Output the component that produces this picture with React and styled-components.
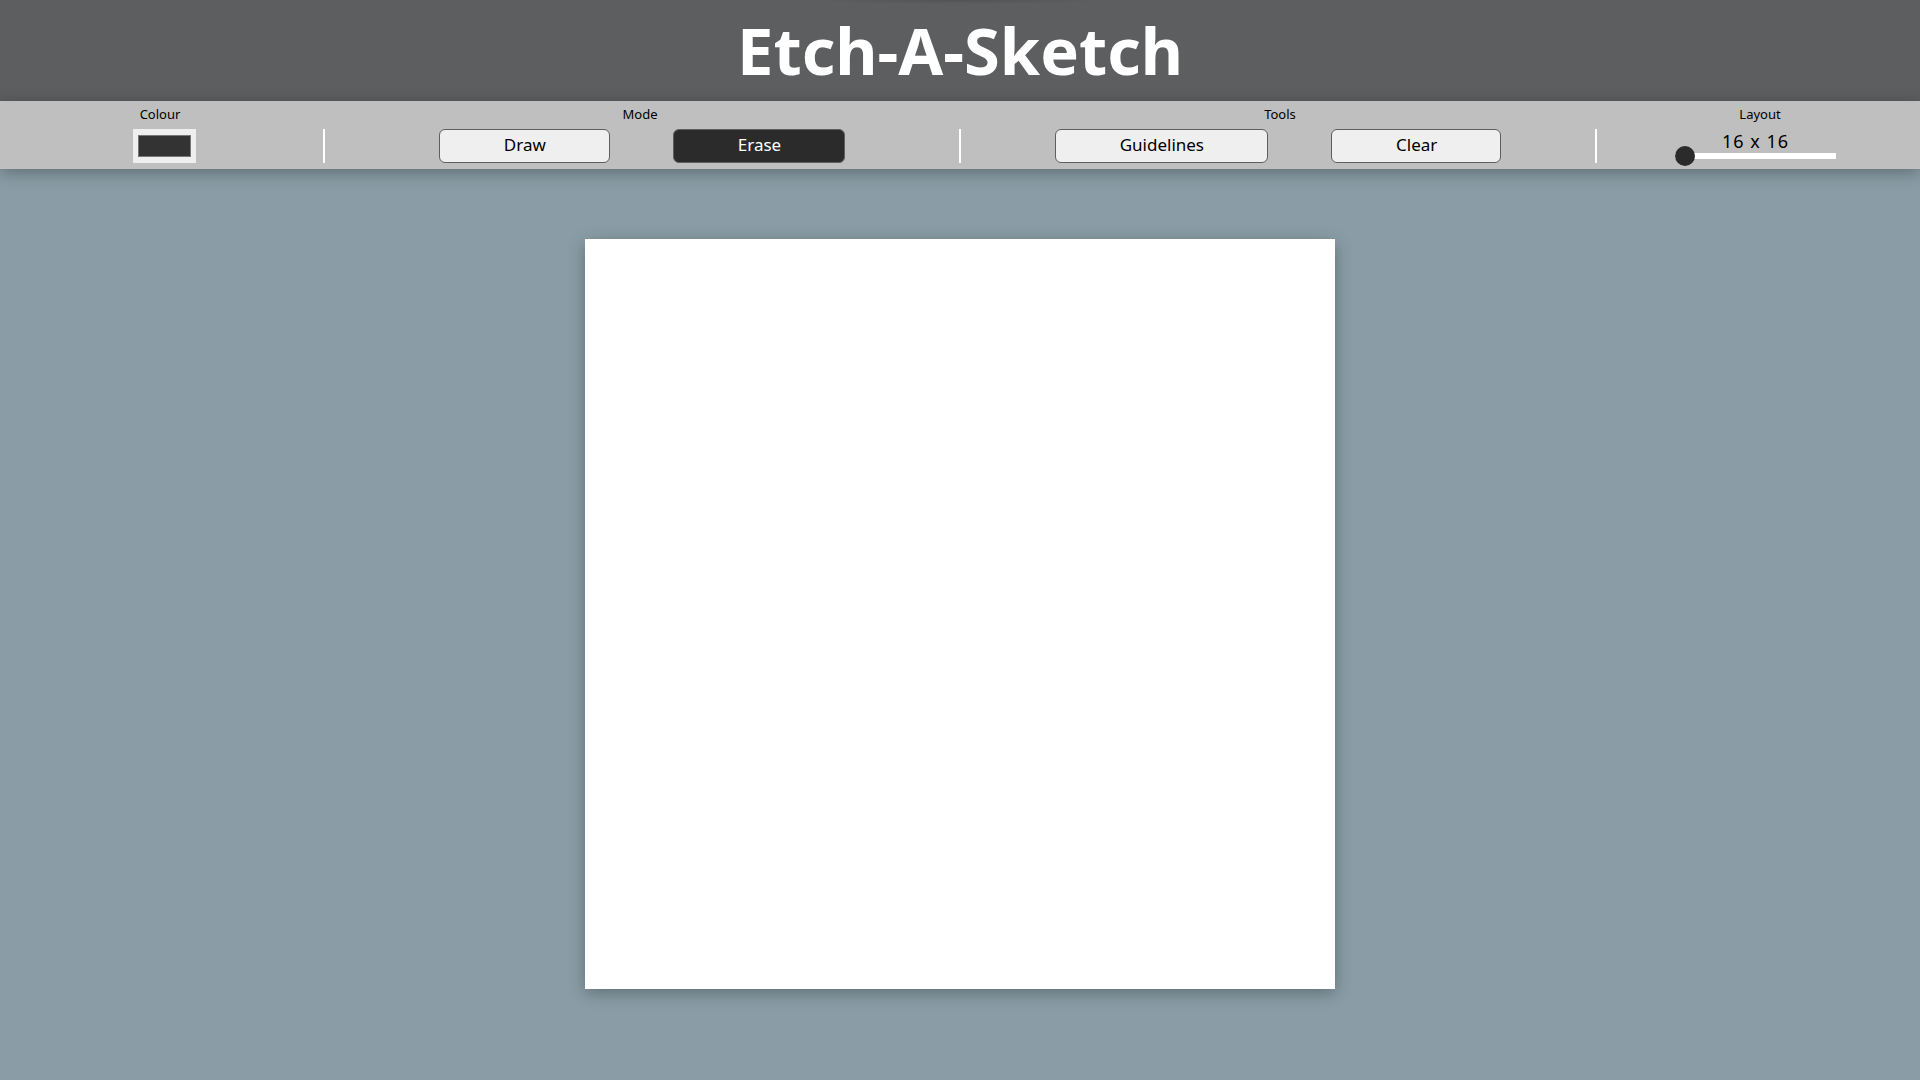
import React, { useState } from "react";
import styled, { createGlobalStyle } from "styled-components";

const GlobalStyle = createGlobalStyle`
  *, *::before, *::after { box-sizing: border-box; }
  body {
    margin: 0;
    background: #8a9da6;
    color: #000;
    font-family: "Lucida Sans", "Lucida Grande", "Noto Sans", sans-serif;
  }
`;

const Page = styled.div`
  min-height: 100vh;
  display: flex;
  flex-direction: column;
`;

const Header = styled.header`
  padding: 10px 16px 11px;
  background: radial-gradient(150px 4px at 50% 0, rgba(0, 0, 0, 0.12), transparent) #5d5e60;
`;

const Title = styled.h1`
  margin: 0;
  color: #fff;
  font-size: 65px;
  line-height: 80px;
  font-weight: 700;
  text-align: center;
`;

const Toolbar = styled.section`
  position: relative;
  background: #bfbfbf;
  padding-bottom: 6px;
  box-shadow: 0 4px 16px rgba(0, 0, 0, 0.3);
`;

const Labels = styled.div`
  display: grid;
  grid-template-columns: 1fr 2fr 2fr 1fr;
  padding: 3px 0 5px;
  font-size: 13px;
  line-height: 20px;
  text-align: center;
`;

const Controls = styled.div`
  display: grid;
  grid-template-columns: 1fr 2px 2fr 2px 2fr 2px 1fr;
  padding: 0 6px;
  height: 34px;
`;

const Divider = styled.span`
  background: #fff;
`;

const Group = styled.div`
  display: flex;
  justify-content: center;
  gap: 63px;
`;

const ColourInput = styled.input`
  width: 63px;
  height: 34px;
  padding: 2px 3px;
  border: 0;
  background: #efefef;
`;

const ToolButton = styled.button`
  height: 34px;
  padding: 0 63px 2px 64px;
  border: 1px solid #5d5e60;
  border-radius: 6px;
  background: ${(p) => (p.$active ? "#2b2b2b" : "#efefef")};
  color: ${(p) => (p.$active ? "#fff" : "#000")};
  font-family: inherit;
  font-size: 17px;
  line-height: 20px;
`;

const SizeControl = styled.div`
  display: flex;
  flex-direction: column;
  align-items: center;
`;

const SizeText = styled.output`
  font-size: 18px;
  line-height: 24px;
  letter-spacing: 1px;
`;

const Slider = styled.input`
  appearance: none;
  width: 161px;
  height: 6px;
  margin: 0;
  background: #fff;

  &::-webkit-slider-thumb {
    appearance: none;
    width: 20px;
    height: 20px;
    border-radius: 50%;
    background: #2b2b2b;
  }
`;

const Main = styled.main`
  flex: 1;
  display: flex;
  justify-content: center;
  padding: 70px 16px;
`;

const Board = styled.div`
  width: 100%;
  max-width: 750px;
  align-self: flex-start;
  aspect-ratio: 1;
  background: #fff;
  box-shadow: 0 4px 16px rgba(0, 0, 0, 0.3);
`;

export default function App() {
  const [colour, setColour] = useState("#333333");
  const [mode, setMode] = useState("erase");
  const [size, setSize] = useState(16);

  return (
    <>
      <GlobalStyle />
      <Page>
        <Header>
          <Title>Etch-A-Sketch</Title>
        </Header>
        <Toolbar>
          <Labels>
            <label htmlFor="colour">Colour</label>
            <span id="mode-label">Mode</span>
            <span id="tools-label">Tools</span>
            <label htmlFor="size">Layout</label>
          </Labels>
          <Controls>
            <Group>
              <ColourInput
                id="colour"
                type="color"
                value={colour}
                onChange={(e) => setColour(e.target.value)}
              />
            </Group>
            <Divider />
            <Group role="group" aria-labelledby="mode-label">
              <ToolButton $active={mode === "draw"} onClick={() => setMode("draw")}>
                Draw
              </ToolButton>
              <ToolButton $active={mode === "erase"} onClick={() => setMode("erase")}>
                Erase
              </ToolButton>
            </Group>
            <Divider />
            <Group role="group" aria-labelledby="tools-label">
              <ToolButton>Guidelines</ToolButton>
              <ToolButton>Clear</ToolButton>
            </Group>
            <Divider />
            <SizeControl>
              <SizeText htmlFor="size">{`${size} x ${size}`}</SizeText>
              <Slider
                id="size"
                type="range"
                min="16"
                max="64"
                value={size}
                onChange={(e) => setSize(Number(e.target.value))}
              />
            </SizeControl>
          </Controls>
        </Toolbar>
        <Main>
          <Board />
        </Main>
      </Page>
    </>
  );
}
